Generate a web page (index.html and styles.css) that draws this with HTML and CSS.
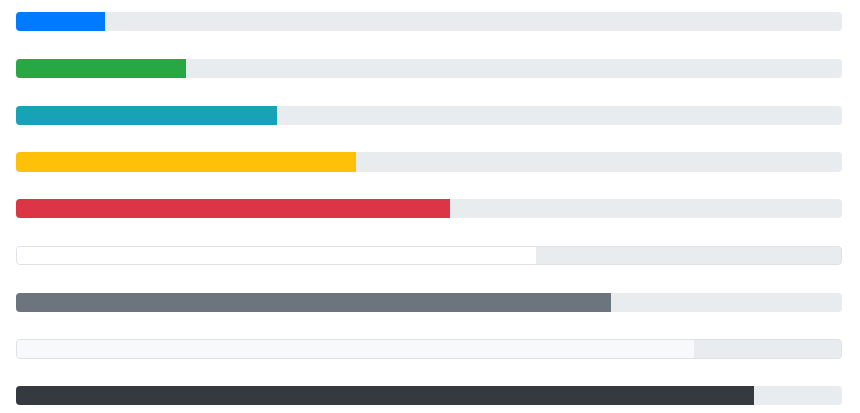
FILE: index.html
```html
<!DOCTYPE html>
<html lang="en">
<head>
    <meta charset="UTF-8">
    <title>Progress bars</title>
    <link rel="stylesheet" href="styles.css">
</head>
<body>
    <div class="bars">
        <div class="progress"><div class="bar bg-primary" style="width: 10.8%"></div></div>
        <div class="progress"><div class="bar bg-success" style="width: 20.6%"></div></div>
        <div class="progress"><div class="bar bg-info" style="width: 31.6%"></div></div>
        <div class="progress"><div class="bar bg-warning" style="width: 41.2%"></div></div>
        <div class="progress"><div class="bar bg-danger" style="width: 52.5%"></div></div>
        <div class="progress bordered"><div class="bar bg-white" style="width: 63%"></div></div>
        <div class="progress"><div class="bar bg-secondary" style="width: 72%"></div></div>
        <div class="progress bordered"><div class="bar bg-light" style="width: 82.1%"></div></div>
        <div class="progress"><div class="bar bg-dark" style="width: 89.3%"></div></div>
    </div>
</body>
</html>
```

FILE: styles.css
```css
body {
    margin: 0;
    background-color: #fff;
    font-family: 'Liberation Sans', sans-serif;
}
.bars {
    display: flex;
    flex-direction: column;
    gap: 27.6px;
    padding: 12px 18px 0 16px;
}
.progress {
    display: flex;
    height: 19.2px;
    background-color: #e9ecef;
    border-radius: 4px;
    overflow: hidden;
    box-sizing: border-box;
}
.progress.bordered {
    border: 1px solid #dee2e6;
}
.bar { height: 100%; }
.bg-primary { background-color: #007bff; }
.bg-success { background-color: #28a745; }
.bg-info { background-color: #17a2b8; }
.bg-warning { background-color: #ffc107; }
.bg-danger { background-color: #dc3545; }
.bg-white { background-color: #fff; }
.bg-secondary { background-color: #6c757d; }
.bg-light { background-color: #f8f9fa; }
.bg-dark { background-color: #343a40; }
```
